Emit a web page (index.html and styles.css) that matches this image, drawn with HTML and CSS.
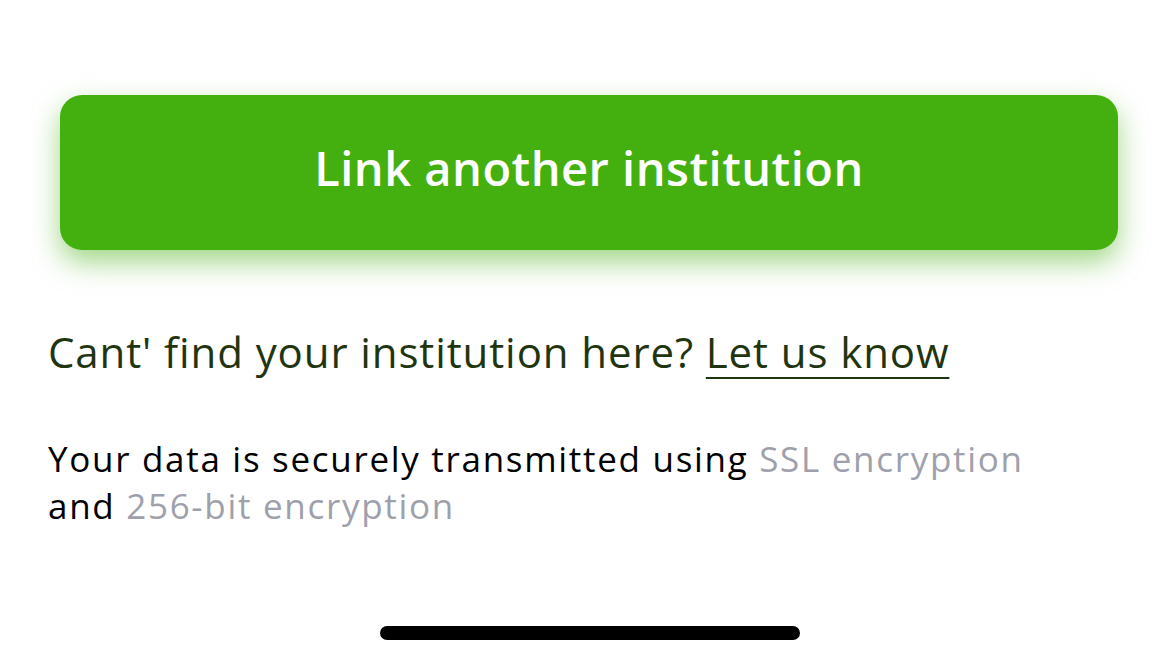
FILE: index.html
```html
<!DOCTYPE html>
<html lang="en">
<head>
    <meta charset="UTF-8">
    <meta name="viewport" content="width=device-width, initial-scale=1.0">
    <title>Link institution</title>
    <link rel="stylesheet" href="styles.css">
</head>
<body>
<div id="screen">
    <div class="actions">
        <button type="button" class="link-btn">Link another institution</button>
    </div>

    <p class="help">Cant' find your institution here? <a href="#">Let us know</a></p>

    <p class="secure">
        Your data is securely transmitted using <span class="muted">SSL encryption</span><br>
        and <span class="muted">256-bit encryption</span>
    </p>

    <div class="home-bar"></div>
</div>
</body>
</html>
```

FILE: styles.css
```css
body {
    margin: 0;
    background: #fff;
    font-family: "Open Sans", "Noto Sans", sans-serif;
}

#screen {
    width: 1176px;
    height: 665px;
    display: flex;
    flex-direction: column;
    overflow: hidden;
}

.actions {
    padding: 95px 58px 0 60px;
}

.link-btn {
    width: 100%;
    height: 155px;
    padding: 0 0 9px;
    border: none;
    border-radius: 22px;
    background: #44b010;
    color: #fff;
    font-family: inherit;
    font-size: 47px;
    font-weight: 600;
    letter-spacing: 0.5px;
    box-shadow: 0 12px 28px rgba(68, 176, 16, 0.5);
}

.help {
    margin: 77px 0 0 48px;
    font-size: 42px;
    line-height: 50px;
    letter-spacing: 0.9px;
    color: #1f3510;
}

.help a {
    color: #1f3510;
    text-decoration: underline;
    text-underline-offset: 9px;
    text-decoration-thickness: 2px;
}

.secure {
    margin: 58px 0 0 48px;
    font-size: 35px;
    line-height: 47px;
    letter-spacing: 1.7px;
    color: #000;
}

.muted {
    color: #9ea0ab;
}

.home-bar {
    margin: auto 0 25px 380px;
    width: 420px;
    height: 14px;
    border-radius: 7px;
    background: #000;
}
```
